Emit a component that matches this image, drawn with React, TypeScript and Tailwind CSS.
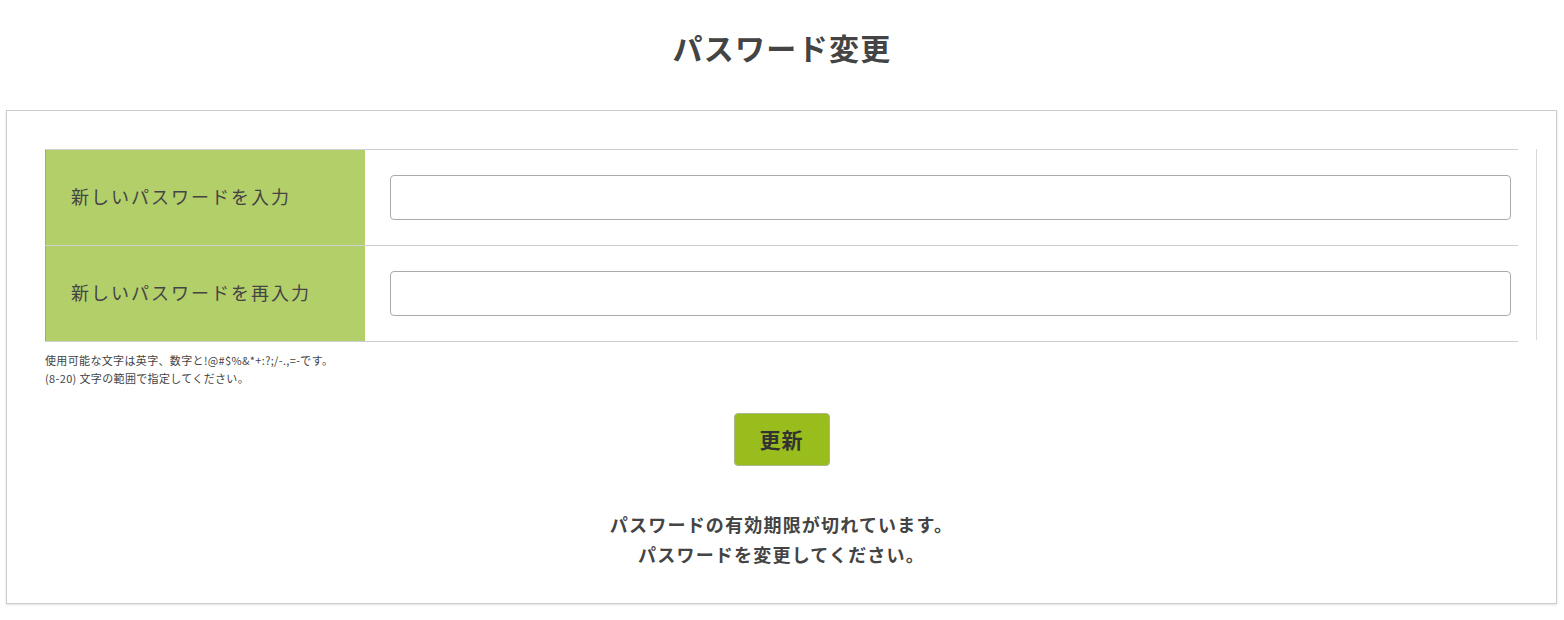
import React from 'react';

const font = { fontFamily: '"Noto Sans CJK JP", "Noto Sans", sans-serif' };

const Row: React.FC<{ label: string }> = ({ label }) => (
  <div className="flex h-[96px] border-b border-[#cfcfcf]">
    <div className="w-[320px] shrink-0 bg-[#b3cf6a] border-l border-[#9cb458] flex items-center pl-[25px] pb-[3px] text-[18px] text-[#444] tracking-[2px]">
      {label}
    </div>
    <div className="flex-1 flex items-center pl-[25px] pr-[7px]">
      <input
        type="password"
        className="w-full h-[45px] border border-[#aaa] rounded-[4px] bg-white outline-none px-3"
      />
    </div>
  </div>
);

export default function App() {
  return (
    <div className="min-h-screen bg-white text-[#444]" style={font}>
      <h1 className="h-[110px] pt-[24px] text-center text-[30px] font-bold leading-[46px] tracking-[1.3px] text-[#444]">
        パスワード変更
      </h1>

      <div className="ml-[6px] mr-[7px] h-[494px] border border-[#cccccc] shadow-[0_1px_2px_rgba(0,0,0,0.12)] pt-[38px] pl-[38px] pr-[18px]">
        <div className="flex">
          <div className="w-[1473px] border-t border-[#cfcfcf]">
            <Row label="新しいパスワードを入力" />
            <Row label="新しいパスワードを再入力" />
          </div>
          <div className="ml-[18px] w-px h-[191px] bg-[#d8d8d8]" />
        </div>

        <div className="pt-[9px] text-[11px] leading-[18px] tracking-[0.35px] text-[#444]">
          <p>使用可能な文字は英字、数字と!@#$%&amp;*+:?;/-.,=-です。</p>
          <p>(8-20) 文字の範囲で指定してください。</p>
        </div>

        <div className="flex justify-center pt-[26px] pr-[20px]">
          <button className="w-[96px] h-[53px] bg-[#9abd1e] border border-[#a9b88a] rounded-[4px] text-[21px] font-bold tracking-[1px] text-[#333]">
            更新
          </button>
        </div>

        <div className="pt-[43px] pr-[20px] text-center text-[18px] font-bold leading-[30px] tracking-[1.2px] text-[#444]">
          <p>パスワードの有効期限が切れています。</p>
          <p>パスワードを変更してください。</p>
        </div>
      </div>
    </div>
  );
}
